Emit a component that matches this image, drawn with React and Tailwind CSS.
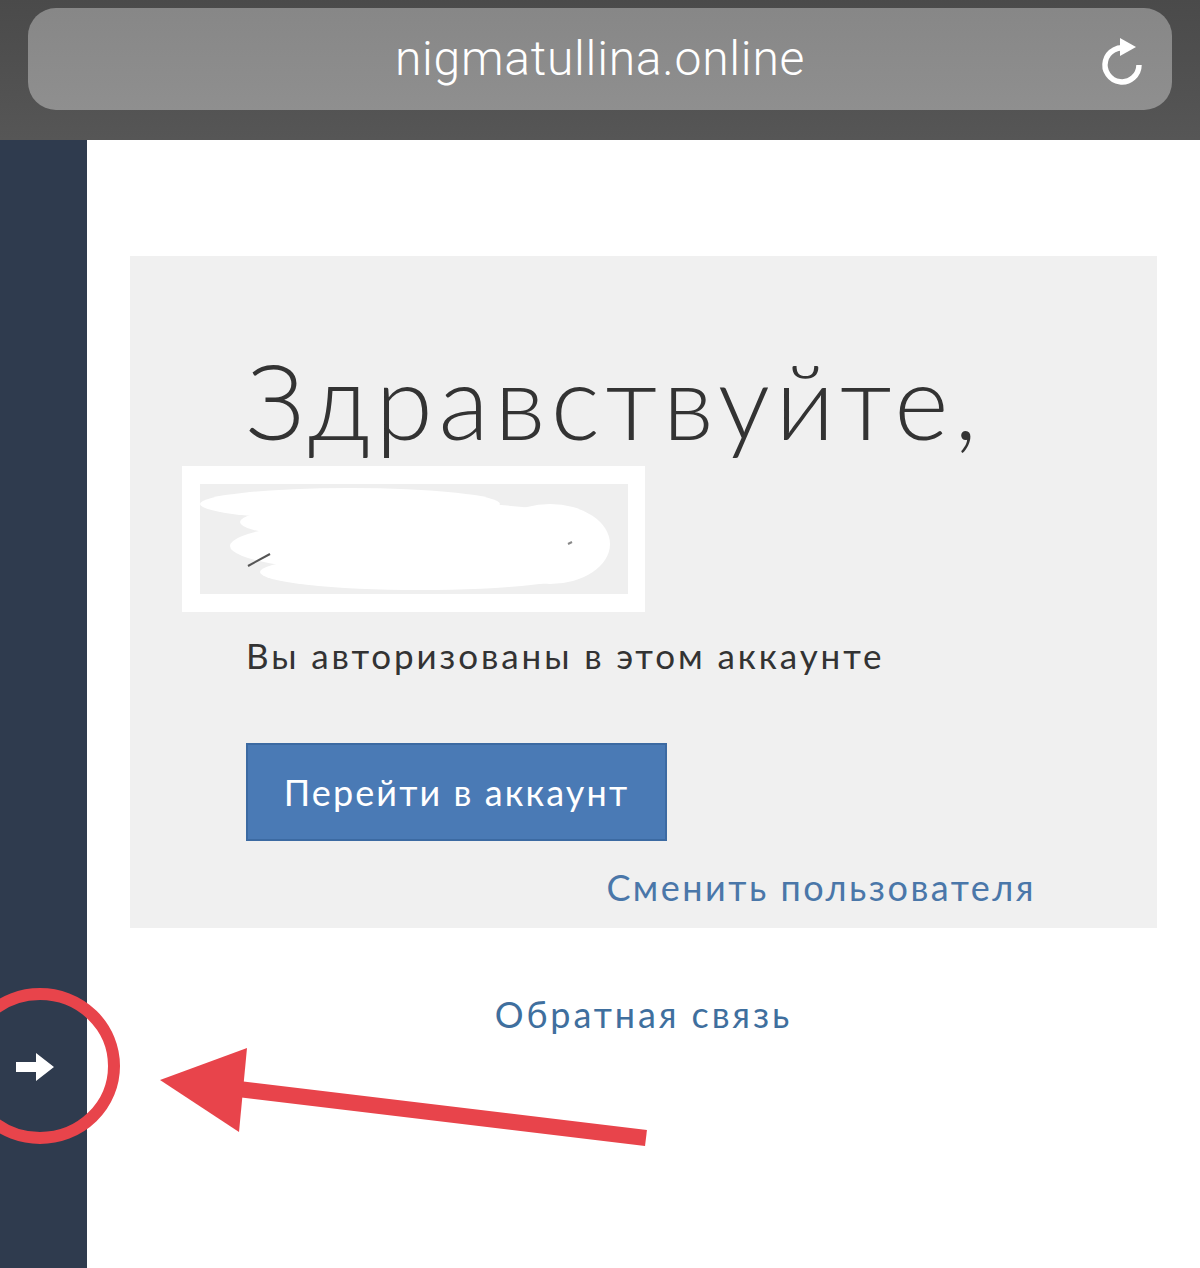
import React from 'react';

const ReloadIcon = () => (
  <svg width="48" height="56" viewBox="0 0 48 56" fill="none">
    <path d="M30 17 A17 17 0 1 0 41 33" stroke="white" strokeWidth="5.5" strokeLinecap="butt" fill="none" />
    <path d="M22 6 L38 15 L22 24 Z" fill="white" />
  </svg>
);

const Scribble = () => (
  <svg width="428" height="110" viewBox="0 0 428 110" className="block">
    <rect width="428" height="110" fill="#efefef" />
    <ellipse cx="150" cy="20" rx="150" ry="16" fill="white" />
    <ellipse cx="210" cy="38" rx="170" ry="20" fill="white" />
    <ellipse cx="190" cy="62" rx="160" ry="26" fill="white" />
    <ellipse cx="220" cy="88" rx="160" ry="18" fill="white" />
    <ellipse cx="350" cy="60" rx="60" ry="40" fill="white" />
    <path d="M48 82 L70 70" stroke="#555" strokeWidth="2" />
    <path d="M368 60 L372 58" stroke="#888" strokeWidth="2" />
  </svg>
);

export default function App() {
  return (
    <div className="relative w-[1200px] h-[1268px] overflow-hidden bg-white" style={{ fontFamily: 'Lato, "Open Sans", sans-serif' }}>
      {/* Browser bar */}
      <div className="h-[140px] bg-gradient-to-b from-[#4a4a4a] to-[#565656] px-[28px] pt-[8px]">
        <div className="relative h-[102px] rounded-[28px] bg-gradient-to-b from-[#878787] to-[#8f8f8f] flex items-center justify-center">
          <span className="text-white text-[48px] font-light tracking-[0.75px]" style={{ fontFamily: 'Roboto, sans-serif' }}>
            nigmatullina.online
          </span>
          <div className="absolute right-[26px] top-[24px]">
            <ReloadIcon />
          </div>
        </div>
      </div>

      <div className="flex h-[1128px]">
        {/* Sidebar */}
        <div className="w-[87px] bg-[#2f3b4e] relative">
          <svg className="absolute left-[14px] top-[911px]" width="42" height="32" viewBox="0 0 42 32">
            <path d="M2 11 H22 V2 L40 16 L22 30 V21 H2 Z" fill="white" />
          </svg>
        </div>

        {/* Main */}
        <div className="flex-1 pt-[116px] px-[43px]">
          <div className="bg-[#f0f0f0] h-[672px] pl-[116px] pt-[92px]">
            <h1 className="text-[104px] leading-none font-light text-[#333] tracking-[5.6px]">Здравствуйте,</h1>
            <div className="-ml-[64px] mt-[14px] w-[463px] bg-white p-[18px]">
              <Scribble />
            </div>
            <p className="mt-[26px] text-[35px] leading-none text-[#333] tracking-[2.9px]">Вы авторизованы в этом аккаунте</p>
            <button className="mt-[70px] w-[421px] h-[98px] bg-[#4a7ab5] border-2 border-[#3c6aa2] text-white text-[36px] tracking-[2.1px] flex items-center justify-center">
              Перейти в аккаунт
            </button>
            <div className="mt-[28px] w-[790px] text-right text-[36px] leading-none text-[#4a77a9] tracking-[2.5px]">
              Сменить пользователя
            </div>
          </div>
          <div className="mt-[68px] text-center text-[36px] leading-none text-[#3f6f9e] tracking-[2.9px]">
            Обратная связь
          </div>
        </div>
      </div>

      {/* Annotation: red circle and arrow */}
      <svg className="absolute left-0 top-0 pointer-events-none" width="1200" height="1268" viewBox="0 0 1200 1268">
        <ellipse cx="40" cy="1066" rx="74" ry="72" fill="none" stroke="#e8444b" strokeWidth="12" />
        <line x1="646" y1="1138" x2="230" y2="1088" stroke="#e8444b" strokeWidth="16" />
        <polygon points="160,1080 247,1048 239,1132" fill="#e8444b" />
      </svg>
    </div>
  );
}
